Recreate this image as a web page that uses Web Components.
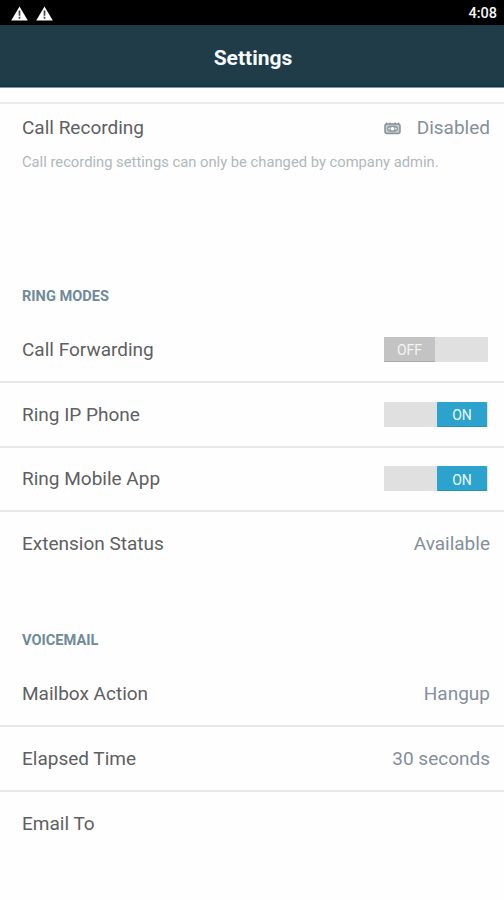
<!DOCTYPE html>
<html lang="en">
<head>
<meta charset="utf-8">
<title>Settings</title>
<style>
  body {
    margin: 0;
    height: 900px;
    overflow: hidden;
    background: #fefefe;
    font-family: Roboto, "Liberation Sans", sans-serif;
  }
</style>
</head>
<body>
<settings-screen></settings-screen>

<script>
// build a class cloning the markup in a shadow root
const component = (html) => {
  const template = document.createElement('template');
  template.innerHTML = html;
  return class extends HTMLElement {
    constructor() {
      super();
      this.attachShadow({ mode: 'open' }).appendChild(template.content.cloneNode(true));
    }
  };
};

// warning triangle shown in the status bar
customElements.define('warning-icon', component(`
<style>
  :host { display: block; width: 17px; height: 15px; }
  svg { display: block; }
</style>
<svg width="17" height="15" viewBox="0 0 17 15">
  <path d="M8.5 0.4 L16.8 14.4 H0.2 Z" fill="#fff"/>
  <path d="M8.5 4.4 V9.8 M8.5 10.8 V12.8" stroke="#444" stroke-width="1.7"/>
</svg>
`));

// cassette next to the call recording value
customElements.define('recorder-icon', component(`
<style>
  :host { display: block; width: 17px; height: 14px; }
  svg { display: block; }
</style>
<svg width="17" height="14" viewBox="0 0 17 14" fill="none" stroke="#87919a">
  <rect x="1" y="3" width="15" height="9.5" rx="2" fill="#c5cbd0" stroke-width="1.5"/>
  <path d="M2.5 1.4 V3 M6 1.4 V3 M11 1.4 V3 M14.5 1.4 V3" stroke-width="1.4"/>
  <rect x="3.6" y="5.2" width="9.8" height="5" rx="2.5" fill="#a5adb4" stroke-width="1"/>
  <circle cx="8.5" cy="7.7" r="1.7" fill="#fff" stroke="none"/>
  <path d="M4.3 7.7 H5.8 M11.2 7.7 H12.7" stroke="#eef0f2" stroke-width="1.2"/>
</svg>
`));

customElements.define('status-bar', component(`
<style>
  :host {
    display: flex;
    justify-content: space-between;
    align-items: center;
    height: 25px;
    padding: 1px 7px 0 11px;
    box-sizing: border-box;
    background: #000;
    color: #f5f5f5;
    font-size: 14.5px;
    font-weight: 500;
  }
  .icons { display: flex; gap: 8px; }
</style>
<div class="icons"><warning-icon></warning-icon><warning-icon></warning-icon></div>
<slot></slot>
`));

customElements.define('title-bar', component(`
<style>
  :host {
    display: flex;
    justify-content: center;
    align-items: center;
    height: 63px;
    padding: 2px 0 0 2px;
    box-sizing: border-box;
    background: linear-gradient(#203c49 60px, #10374c 60px, #10374c 62px, #8297a1 62px);
    color: #f4fafd;
    font-size: 21px;
    font-weight: 700;
    line-height: 24px;
  }
</style>
<span><slot></slot></span>
`));

// caption above a group of rows
customElements.define('section-title', component(`
<style>
  :host {
    display: block;
    padding-left: 22px;
    color: #6f8b99;
    font-size: 14.6px;
    font-weight: 700;
    line-height: 20px;
  }
</style>
<slot></slot>
`));

// label on the left, slotted value or switch on the right
customElements.define('setting-row', component(`
<style>
  :host {
    display: flex;
    justify-content: space-between;
    align-items: center;
    height: 64.8px;
    padding: 0 14px 0 22px;
    box-sizing: border-box;
    border-bottom: 2px solid #e8e8e8;
    color: #5e6061;
    font-size: 19px;
  }
  :host([last]) { border-bottom-color: transparent; }
  .value {
    display: flex;
    align-items: center;
    gap: 16px;
    color: #848f9c;
  }
</style>
<span><slot></slot></span>
<div class="value"><slot name="value"></slot></div>
`));

// switch with a sliding thumb, on or off
customElements.define('toggle-switch', component(`
<style>
  :host {
    display: flex;
    width: 104px;
    height: 25px;
    margin-right: 2px;
    box-sizing: border-box;
    background: #e0e0e0;
  }
  .thumb {
    display: flex;
    justify-content: center;
    align-items: center;
    width: 51px;
    box-sizing: border-box;
    padding-top: 3px;
    background: #c3c3c3;
    border-bottom: 1px solid #aaa;
    color: #f3f3f3;
    font-size: 14px;
  }
  :host([on]) { justify-content: flex-end; padding-right: 1px; }
  :host([on]) .thumb {
    width: 50px;
    background: #2ba3cd;
    border-bottom: 1px solid #2592ba;
    border-radius: 1px;
    color: #effbff;
  }
</style>
<div class="thumb"><slot></slot></div>
`));

customElements.define('setting-hint', component(`
<style>
  :host {
    display: block;
    padding-left: 22px;
    color: #b0b8bc;
    font-size: 14.75px;
    line-height: 20px;
    white-space: nowrap;
  }
</style>
<slot></slot>
`));

customElements.define('settings-screen', component(`
<style>
  :host { display: block; }
  .recording {
    height: 169px;
    margin-top: 14px;
    border-top: 2px solid #ececec;
    box-sizing: border-box;
  }
  .recording setting-row { height: 48px; padding-top: 1px; }
  .group { padding-top: 15px; }
  .voicemail { margin-top: 38px; }
  section-title { margin-bottom: 12px; }
</style>
<status-bar>4:08</status-bar>
<title-bar>Settings</title-bar>
<div class="recording">
  <setting-row last>Call Recording
    <recorder-icon slot="value"></recorder-icon>
    <span slot="value">Disabled</span>
  </setting-row>
  <setting-hint>Call recording settings can only be changed by company admin.</setting-hint>
</div>
<div class="group">
  <section-title>RING MODES</section-title>
  <setting-row>Call Forwarding<toggle-switch slot="value">OFF</toggle-switch></setting-row>
  <setting-row>Ring IP Phone<toggle-switch slot="value" on>ON</toggle-switch></setting-row>
  <setting-row>Ring Mobile App<toggle-switch slot="value" on>ON</toggle-switch></setting-row>
  <setting-row last>Extension Status<span slot="value">Available</span></setting-row>
</div>
<div class="group voicemail">
  <section-title>VOICEMAIL</section-title>
  <setting-row>Mailbox Action<span slot="value">Hangup</span></setting-row>
  <setting-row>Elapsed Time<span slot="value">30 seconds</span></setting-row>
  <setting-row last>Email To</setting-row>
</div>
`));
</script>
</body>
</html>
